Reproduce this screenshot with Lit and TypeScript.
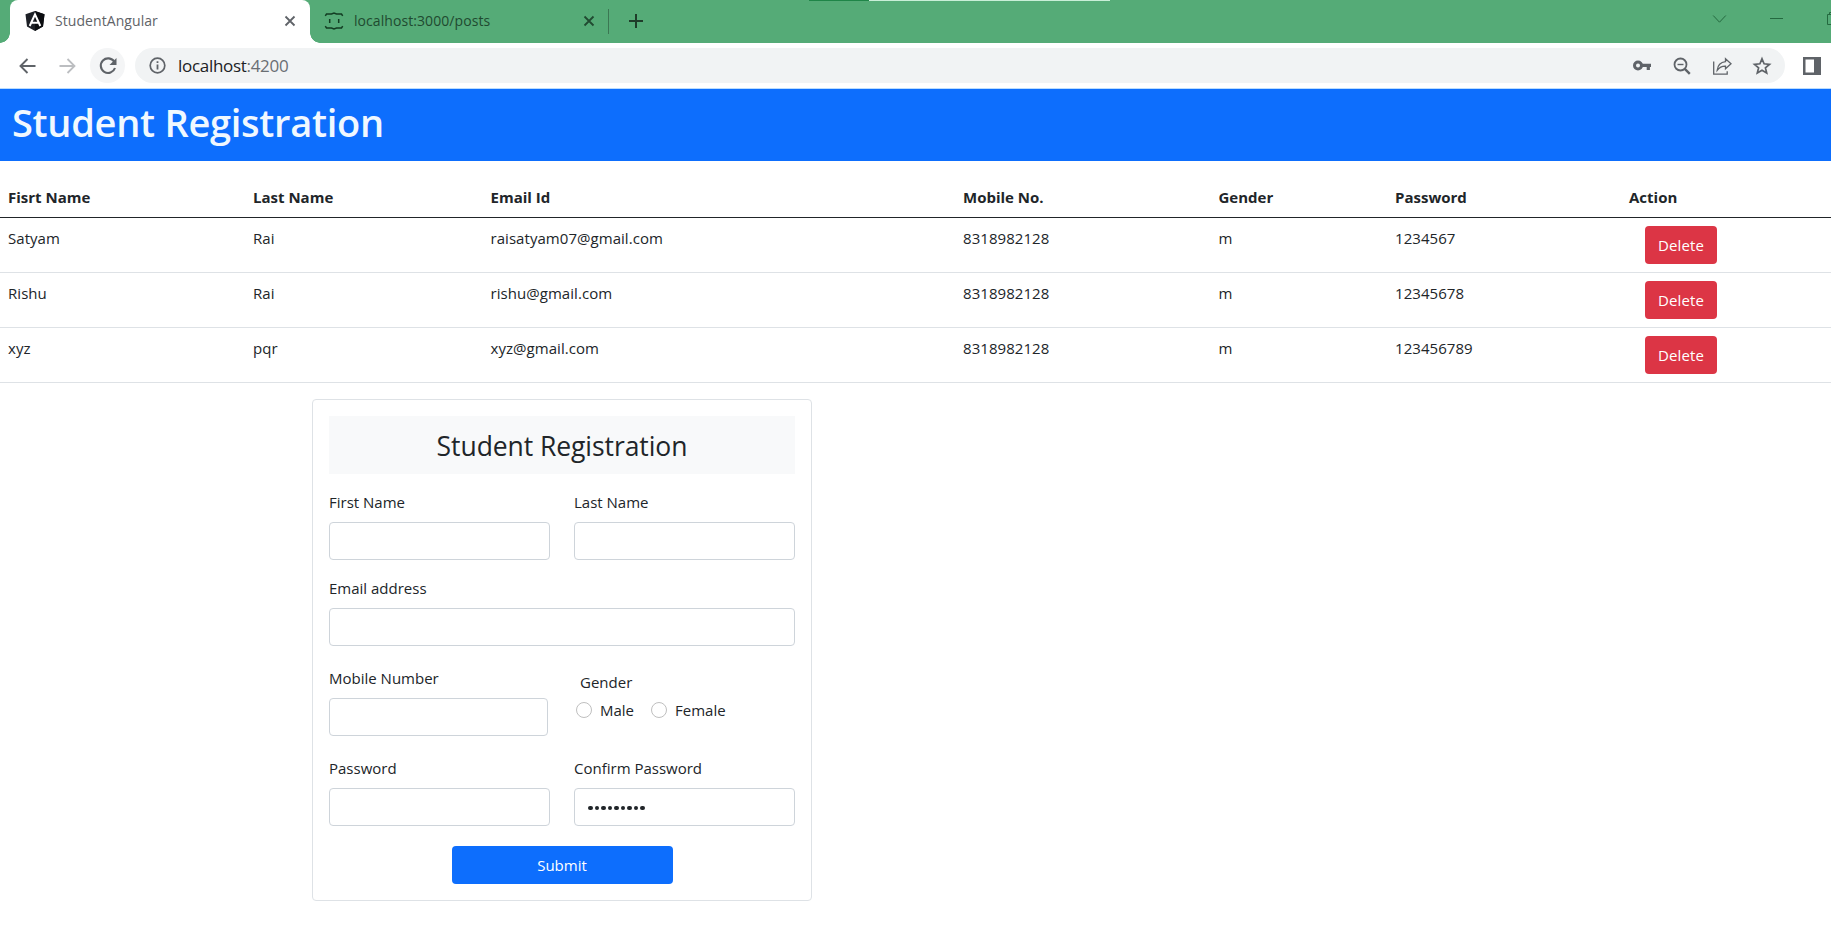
import { LitElement, html, css } from "lit";
import { customElement } from "lit/decorators.js";

const students = [
  ["Satyam", "Rai", "raisatyam07@gmail.com", "8318982128", "m", "1234567"],
  ["Rishu", "Rai", "rishu@gmail.com", "8318982128", "m", "12345678"],
  ["xyz", "pqr", "xyz@gmail.com", "8318982128", "m", "123456789"],
];

const headings = ["Fisrt Name", "Last Name", "Email Id", "Mobile No.", "Gender", "Password", "Action"];

@customElement("browser-chrome")
class BrowserChrome extends LitElement {
  static styles = css`
    :host { display: block; font-family: "Open Sans", "Noto Sans", sans-serif; }
    * { box-sizing: border-box; }
    svg { display: block; flex: none; fill: none; stroke: #5f6368; overflow: visible; }
    .strip { height: 43px; display: flex; background: #55ab77; padding-left: 10px; position: relative; }
    .tab { width: 300px; height: 43px; display: flex; align-items: center; padding: 0 15px 1px 14px; font-size: 14px; letter-spacing: 0.07px; color: #5f6368; }
    .tab.active { background: #fff; border-radius: 8px 8px 0 0; position: relative; }
    .tab.active::before, .tab.active::after { content: ""; position: absolute; bottom: 0; width: 10px; height: 10px; }
    .tab.active::before { right: 100%; background: radial-gradient(circle at 0 0, transparent 9.5px, #fff 10px); }
    .tab.active::after { left: 100%; background: radial-gradient(circle at 100% 0, transparent 9.5px, #fff 10px); }
    .tab.other { color: #1f4a30; width: 298px; padding-right: 14px; }
    .tab-title { margin-left: 9px; padding-bottom: 1px; flex: 1; }
    .other .tab-title { margin-left: 10px; }
    .divider { width: 1px; height: 25px; margin: 9px 20px 0 0; background: #3b7753; }
    .plus { margin-top: 14px; }
    .edge { position: absolute; top: 0; left: 809px; width: 301px; height: 1px; background: linear-gradient(90deg, #1f8548 60px, #c9efd8 60px); }
    .window { margin-left: auto; height: 37px; display: flex; align-items: center; gap: 43px; }
    .window svg { stroke: #24693f; }
    .bar { height: 45px; display: flex; align-items: center; padding: 0 10px 0 19px; background: #fff; }
    .forward { margin-left: 23px; }
    .reload { width: 35px; height: 35px; border-radius: 50%; background: #f4f5f6; display: grid; place-items: center; margin: 0 10px 0 14px; }
    .omni { flex: 1; height: 35px; border-radius: 18px; background: #f1f3f4; display: flex; align-items: center; padding: 0 14px; margin-right: 18px; }
    .url { flex: 1; margin-left: 12px; font-size: 17px; letter-spacing: -0.3px; color: #202124; }
    .port { color: #6a6e73; }
    .tools { display: flex; gap: 22px; }
    .line { height: 1px; background: #b9dcff; }
  `;
  render() {
    return html`
      <div class="strip">
        <div class="edge"></div>
        <div class="tab active">
          <svg width="22" height="22" viewBox="0 0 22 22"><path d="M11 1l9.5 3.3-1.5 12.2-8 4.5-8-4.5L1.5 4.3z" fill="#1d2026" stroke="none"/><path d="M11 1l9.5 3.3-1.5 12.2-8 4.5z" fill="#0b0d10" stroke="none"/><path d="M5.7 16L11 4.3 16.3 16M7.8 12.7h6.4" stroke="#fff" stroke-width="2"/></svg>
          <span class="tab-title">StudentAngular</span>
          <svg width="10" height="10" viewBox="0 0 10 10"><path d="M.5.5l9 9M9.5.5l-9 9" stroke-width="1.8"/></svg>
        </div>
        <div class="tab other">
          <svg width="20" height="20" viewBox="0 0 20 20" stroke-width="1.5"><g stroke="#123c22"><path d="M1.3 4.8L2.5 3H7.500L10 2l2.500 1h5l1.200 1.800M1.300 15.200L2.500 17H7.500l2.500 1 2.500-1h5l1.200-1.800M5.700 8v4M14.700 8v4"/></g></svg>
          <span class="tab-title">localhost:3000/posts</span>
          <svg width="10" height="10" viewBox="0 0 10 10"><path d="M.5.5l9 9M9.5.5l-9 9" stroke-width="1.8" stroke="#214a31"/></svg>
        </div>
        <div class="divider"></div>
        <svg class="plus" width="14" height="14" viewBox="0 0 14 14"><path d="M7 0v14M0 7h14" stroke-width="2" stroke="#1f3d2a"/></svg>
        <div class="window">
          <svg width="14" height="8" viewBox="0 0 14 8"><path d="M.2.5l6.300 6.700L12.800.5"/></svg>
          <svg width="14" height="1" viewBox="0 0 14 1"><path d="M0 .5h13"/></svg>
          <svg width="4" height="13" viewBox="0 0 4 13"><path d="M4 2.500H.5v10H4M2.500 2.500v-2H4"/></svg>
        </div>
      </div>
      <div class="bar">
        <svg width="17" height="16" viewBox="0 0 17 16"><path d="M16.500 8H1.500M8.500 1L1.500 8l7 7" stroke-width="1.900"/></svg>
        <svg class="forward" width="17" height="16" viewBox="0 0 17 16"><path d="M.5 8h15M8.500 1l7 7-7 7" stroke-width="1.800" stroke="#bcbec1"/></svg>
        <div class="reload"><svg width="18" height="18" viewBox="0 0 18 18"><path d="M15.300 4.800A7.300 7.300 0 1 0 16 11" stroke-width="2.100"/><path d="M17.500 1v7h-7z" fill="#5f6368" stroke="none"/></svg></div>
        <div class="omni">
          <svg width="17" height="17" viewBox="0 0 17 17"><circle cx="8.500" cy="8.500" r="7.300" stroke-width="1.700"/><path d="M8.500 7.500v5M8.500 4.300v1.800" stroke-width="1.800"/></svg>
          <span class="url">localhost<span class="port">:4200</span></span>
          <div class="tools">
            <svg width="18" height="18" viewBox="0 0 18 18"><circle cx="5" cy="8.500" r="3.500" stroke-width="3"/><path d="M8.500 8.300H18M15.300 8.300v4.700" stroke-width="3.200"/></svg>
            <svg width="18" height="18" viewBox="0 0 18 18"><circle cx="7.500" cy="7.500" r="6" stroke-width="1.800"/><path d="M4.500 7.500h6" stroke-width="1.400"/><path d="M11.800 11.800l5 5" stroke-width="2.400"/></svg>
            <svg width="18" height="18" viewBox="0 0 18 18"><path d="M.7 4.500v12.700h13.500v-3" stroke-width="1.300"/><path d="M12.500 1.700l5.500 5-5.500 5V9.200Q7.500 9 4.200 13.300 5 5.500 12.500 4.700z" stroke-width="1.300"/></svg>
            <svg width="18" height="18" viewBox="0 0 18 18"><path d="M9 1.800l2.100 5 5.400.5-4.100 3.500 1.300 5.300L9 13.300l-4.700 2.800 1.300-5.300L1.500 7.300l5.400-.5z" stroke-width="1.700"/></svg>
          </div>
        </div>
        <svg width="18" height="18" viewBox="0 0 18 18"><path d="M0 0h18v18H0zM2.500 2.500v13h8.500v-13z" fill="#5f6368" fill-rule="evenodd" stroke="none"/></svg>
      </div>
      <div class="line"></div>`;
  }
}

@customElement("app-root")
class AppRoot extends LitElement {
  static styles = css`
    :host { display: block; height: 942px; overflow: hidden; background: #fff; color: #212529; font: 15px/24px "Open Sans", "Noto Sans", sans-serif; }
    * { box-sizing: border-box; }
    .banner { height: 72px; background: #0d6efd; color: #f0f8ff; padding: 8px 12px; font-size: 38px; line-height: 51px; font-weight: 600; letter-spacing: -0.28px; margin-bottom: 16px; }
    .row { display: grid; grid-template-columns: 245px 237.5px 472.5px 255.5px 176.5px 234px 1fr; border-bottom: 1px solid #dee2e6; letter-spacing: 0.05px; }
    .row > * { padding: 8px; }
    .row.head { font-weight: 700; border-color: #212529; letter-spacing: 0; }
    .btn { display: block; height: 38px; border-radius: 4px; color: #fff; text-align: center; border: 0; font: inherit; line-height: 38px; padding: 0; }
    .danger { background: #dc3545; width: 72px; margin-left: 16px; letter-spacing: 0.1px; }
    .primary { background: #0d6efd; width: 221px; margin: 20px auto 0; }
    .card { width: 500px; height: 502px; margin: 16px 0 0 312px; border: 1px solid #dee2e6; border-radius: 4px; padding: 16px; }
    .title { height: 58px; background: #f8f9fa; text-align: center; font-size: 26.5px; line-height: 60px; letter-spacing: -0.07px; margin-bottom: 16px; }
    .fields { display: grid; grid-template-columns: 1fr 1fr; column-gap: 24px; }
    .wide { grid-column: span 2; }
    .input { height: 38px; border: 1px solid #ced4da; border-radius: 4px; margin-top: 8px; padding: 0 13px; display: flex; align-items: center; }
    .mobile { width: 219px; }
    .email { margin-top: 16px; }
    .lower { margin-top: 20px; }
    .gender { padding: 4px 0 0 6px; }
    .radios { display: flex; align-items: center; padding-left: 2px; height: 24px; margin-top: 4px; }
    .radio { width: 16px; height: 16px; border: 1px solid #bfbfbf; border-radius: 50%; margin-right: 8px; }
    .option { width: 51px; }
    .dots { display: flex; gap: 2px; padding-top: 2px; }
    .dot { width: 4.5px; height: 4.5px; border-radius: 50%; background: #212529; }
  `;
  render() {
    return html`<browser-chrome></browser-chrome>
      <div class="banner">Student Registration</div>
      <div class="row head">${headings.map((h) => html`<div>${h}</div>`)}</div>
      ${students.map((s) => html`<div class="row">${s.map((c) => html`<div>${c}</div>`)}<div><button class="btn danger">Delete</button></div></div>`)}
      <div class="card">
        <div class="title">Student Registration</div>
        <div class="fields">
          <div>First Name<div class="input"></div></div>
          <div>Last Name<div class="input"></div></div>
          <div class="wide email">Email address<div class="input"></div></div>
          <div class="lower">Mobile Number<div class="input mobile"></div></div>
          <div class="lower"><div class="gender">Gender</div><div class="radios"><i class="radio"></i><span class="option">Male</span><i class="radio"></i><span>Female</span></div></div>
          <div class="lower">Password<div class="input"></div></div>
          <div class="lower">Confirm Password<div class="input"><div class="dots">${Array.from({ length: 9 }, () => html`<i class="dot"></i>`)}</div></div></div>
        </div>
        <button class="btn primary">Submit</button>
      </div>`;
  }
}
